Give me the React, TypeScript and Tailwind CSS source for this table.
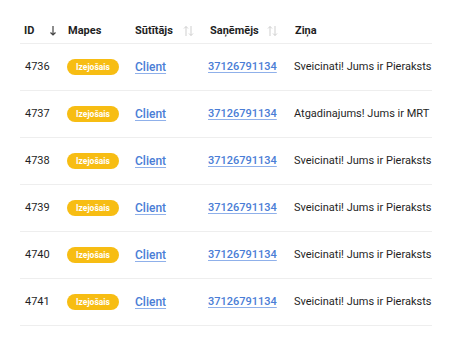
import React from "react";

const rows = [
  { id: 4736, msg: "Sveicinati! Jums ir Pieraksts" },
  { id: 4737, msg: "Atgadinajums! Jums ir MRT" },
  { id: 4738, msg: "Sveicinati! Jums ir Pieraksts" },
  { id: 4739, msg: "Sveicinati! Jums ir Pieraksts" },
  { id: 4740, msg: "Sveicinati! Jums ir Pieraksts" },
  { id: 4741, msg: "Sveicinati! Jums ir Pieraksts" },
];

function SortArrows() {
  return (
    <svg width="11" height="12" viewBox="0 0 11 12" className="text-[#cfcfcf]">
      <path d="M3 11V1.5M1 3.5l2-2 2 2" fill="none" stroke="currentColor" strokeWidth="1" />
      <path d="M8 1v9.5M6 8.5l2 2 2-2" fill="none" stroke="currentColor" strokeWidth="1" />
    </svg>
  );
}

function DownArrow() {
  return (
    <svg width="8" height="12" viewBox="0 0 8 12" className="text-[#444]">
      <path d="M4 1v9M1.5 7.5L4 10l2.5-2.5" fill="none" stroke="currentColor" strokeWidth="1.2" />
    </svg>
  );
}

export default function App() {
  return (
    <div className="w-[452px] h-[348px] bg-white px-[20px] pt-[19px]" style={{ fontFamily: "Roboto, 'Liberation Sans', sans-serif" }}>
      <div className="w-[412px] overflow-hidden">
        <div className="grid grid-cols-[44px_67px_73px_86px_142px] h-[25px] border-b border-[#eeeeee] text-[11px] font-bold text-[#1f1f1f] items-center">
          <div className="flex items-center justify-between pl-[4px] pr-[7px]">
            <span>ID</span>
            <DownArrow />
          </div>
          <div className="pl-[4px]">Mapes</div>
          <div className="flex items-center pl-[4px] gap-[10px]">
            <span>Sūtītājs</span>
            <SortArrows />
          </div>
          <div className="flex items-center pl-[6px] gap-[8px]">
            <span>Saņēmējs</span>
            <SortArrows />
          </div>
          <div className="pl-[5px]">Ziņa</div>
        </div>
        {rows.map((r) => (
          <div key={r.id} className="grid grid-cols-[44px_67px_73px_86px_142px] h-[47px] border-b border-[#eeeeee] items-center text-[11px] text-[#1f1f1f]">
            <div className="pl-[5px]">{r.id}</div>
            <div className="pl-[3px]">
              <span className="inline-flex items-center justify-center w-[52px] h-[16px] rounded-full bg-[#f7bd13] text-white text-[8.5px] font-bold">
                Izejošais
              </span>
            </div>
            <div className="pl-[4px]">
              <a className="text-[12px] font-medium text-[#4a7dd6] underline decoration-[#8fb0ea] underline-offset-[2px]">Client</a>
            </div>
            <div className="pl-[4px]">
              <a className="text-[11px] font-medium text-[#4a7dd6] underline decoration-[#8fb0ea] underline-offset-[2px]">37126791134</a>
            </div>
            <div className="pl-[4px] whitespace-nowrap overflow-hidden">{r.msg}</div>
          </div>
        ))}
      </div>
    </div>
  );
}
